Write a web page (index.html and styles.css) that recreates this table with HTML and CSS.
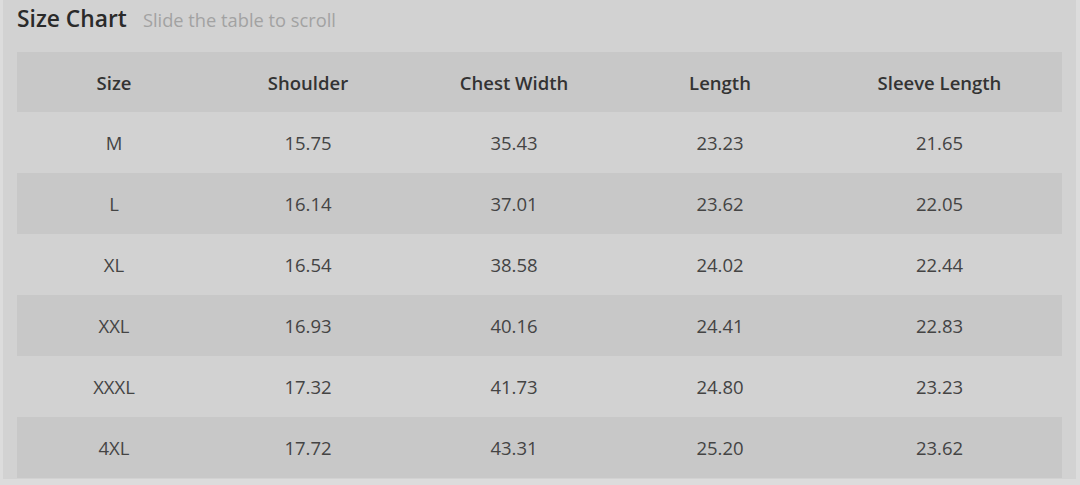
FILE: index.html
```html
<!DOCTYPE html>
<html>
<head>
<meta charset="utf-8">
<link rel="stylesheet" href="styles.css">
</head>
<body>
<div class="frame">
  <div class="heading">
    <span class="title">Size Chart</span>
    <span class="hint">Slide the table to scroll</span>
  </div>
  <table class="chart">
    <colgroup>
      <col class="c1"><col class="c2"><col class="c3"><col class="c4"><col class="c5">
    </colgroup>
    <thead>
      <tr><th>Size</th><th>Shoulder</th><th>Chest Width</th><th>Length</th><th>Sleeve Length</th></tr>
    </thead>
    <tbody>
      <tr><td>M</td><td>15.75</td><td>35.43</td><td>23.23</td><td>21.65</td></tr>
      <tr><td>L</td><td>16.14</td><td>37.01</td><td>23.62</td><td>22.05</td></tr>
      <tr><td>XL</td><td>16.54</td><td>38.58</td><td>24.02</td><td>22.44</td></tr>
      <tr><td>XXL</td><td>16.93</td><td>40.16</td><td>24.41</td><td>22.83</td></tr>
      <tr><td>XXXL</td><td>17.32</td><td>41.73</td><td>24.80</td><td>23.23</td></tr>
      <tr><td>4XL</td><td>17.72</td><td>43.31</td><td>25.20</td><td>23.62</td></tr>
    </tbody>
  </table>
</div>
</body>
</html>
```

FILE: styles.css
```css
html, body {
  margin: 0;
  padding: 0;
  background: #dcdcdc;
  width: 1080px;
  height: 485px;
  overflow: hidden;
}
body {
  font-family: "Open Sans", "Noto Sans", sans-serif;
}
.frame {
  margin-left: 3px;
  width: 1073px;
  height: 479px;
  background: #d2d2d2;
  box-sizing: border-box;
  padding: 3px 0 0 14px;
}
.heading {
  display: flex;
  align-items: baseline;
  gap: 16px;
  height: 49px;
}
.title {
  font-size: 22.8px;
  color: #2a2a2a;
  font-weight: 600;
}
.hint {
  font-size: 18.3px;
  color: #a2a2a2;
}
.chart {
  border-collapse: collapse;
  table-layout: fixed;
  width: 1045px;
}
.c1 { width: 194px; }
.c2 { width: 194px; }
.c3 { width: 218px; }
.c4 { width: 194px; }
.c5 { width: 245px; }
.chart th, .chart td {
  text-align: center;
  padding: 0;
  height: 61px;
  font-size: 18.5px;
}
.chart thead tr { background: #c8c8c8; }
.chart th {
  height: 60px;
  font-weight: 600;
  color: #333;
}
.chart td { color: #444; }
.chart tbody tr:nth-child(even) { background: #c8c8c8; }
```
